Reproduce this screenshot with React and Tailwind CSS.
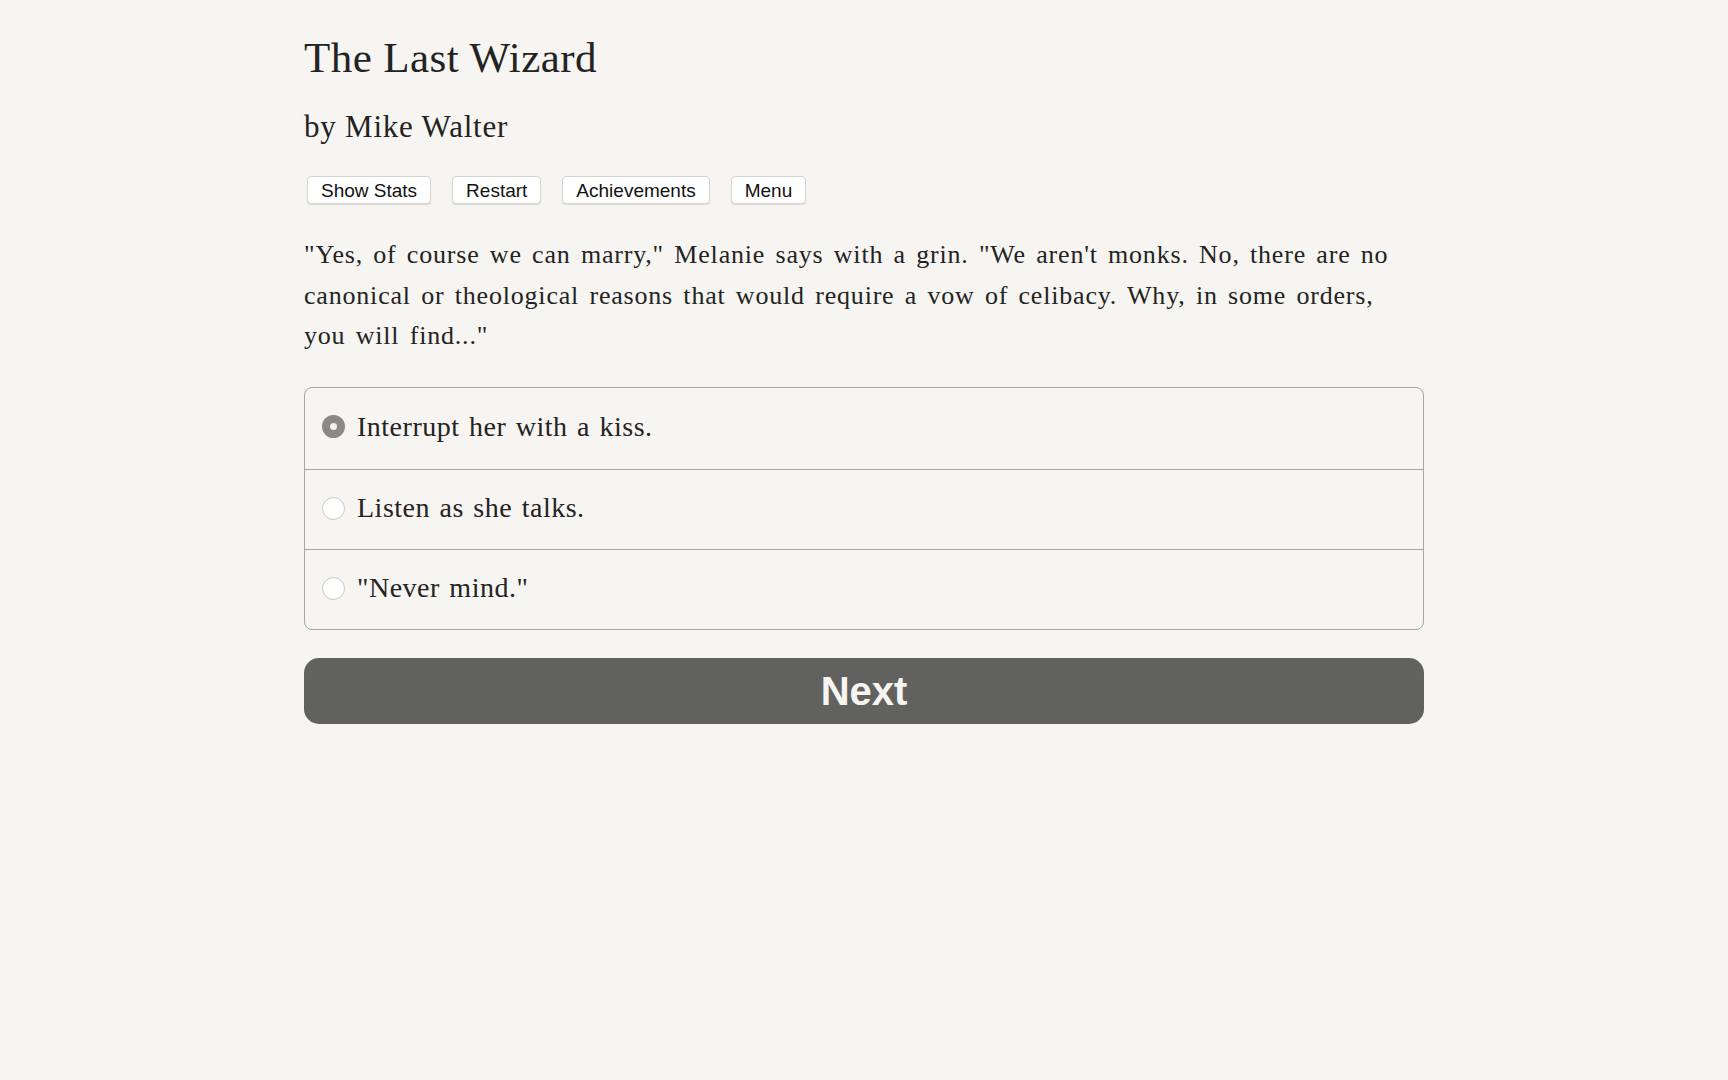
import React, { useState } from 'react';

const choices = [
  'Interrupt her with a kiss.',
  'Listen as she talks.',
  '"Never mind."',
];

const toolbar = ['Show Stats', 'Restart', 'Achievements', 'Menu'];

const serif = "font-['Liberation_Serif','Times_New_Roman',serif]";
const sans = "font-['Liberation_Sans',Arial,sans-serif]";

export default function App() {
  const [selected, setSelected] = useState(0);

  return (
    <div className="min-h-screen bg-[#f7f5f1] text-[#232323]">
      <div className="mx-auto w-[1120px] pt-[32px]">
        <h1 className={`${serif} text-[43px] leading-[52px] tracking-[0.01em]`}>The Last Wizard</h1>
        <h2 className={`${serif} mt-[25px] text-[31px] leading-[36px] tracking-[0.025em]`}>by Mike Walter</h2>

        {/* top toolbar */}
        <div className="mt-[31px] flex gap-[21px] pl-[3px]">
          {toolbar.map((label) => (
            <button
              key={label}
              className={`${sans} h-[28px] rounded-[4px] border border-[#d6d4d0] bg-white px-[13px] text-[19px] leading-none text-[#111] shadow-[0_1px_1px_rgba(0,0,0,0.12)]`}
            >
              {label}
            </button>
          ))}
        </div>

        <p className={`${serif} mt-[31px] text-[26px] leading-[40.5px] tracking-[0.031em] [word-spacing:3px]`}>
          "Yes, of course we can marry," Melanie says with a grin. "We aren't monks. No, there are no canonical or
          theological reasons that would require a vow of celibacy. Why, in some orders, you will find..."
        </p>

        {/* choice list */}
        <div className="mt-[30px] overflow-hidden rounded-[8px] border border-[#a9a7a4]">
          {choices.map((text, i) => (
            <label
              key={text}
              onClick={() => setSelected(i)}
              className={`flex cursor-pointer items-center gap-[12px] pl-[17px] ${
                i > 0 ? 'border-t border-[#a9a7a4]' : ''
              } ${i === 0 ? 'h-[81px] pb-[3px]' : 'h-[80px] pb-[2px]'}`}
            >
              {selected === i ? (
                <span className="flex h-[23px] w-[23px] items-center justify-center rounded-full bg-[#8a8988]">
                  <span className="h-[7px] w-[7px] rounded-full bg-[#f2f1ef]" />
                </span>
              ) : (
                <span className="h-[23px] w-[23px] rounded-full border border-[#c9c7c4] bg-white" />
              )}
              <span className={`${serif} text-[28px] tracking-[0.018em] [word-spacing:2px]`}>{text}</span>
            </label>
          ))}
        </div>

        <button
          className={`${sans} mt-[28px] flex h-[66px] w-full items-center justify-center rounded-[15px] bg-[#616160] text-[40px] font-bold text-[#f7f5f1]`}
        >
          Next
        </button>
      </div>
    </div>
  );
}
